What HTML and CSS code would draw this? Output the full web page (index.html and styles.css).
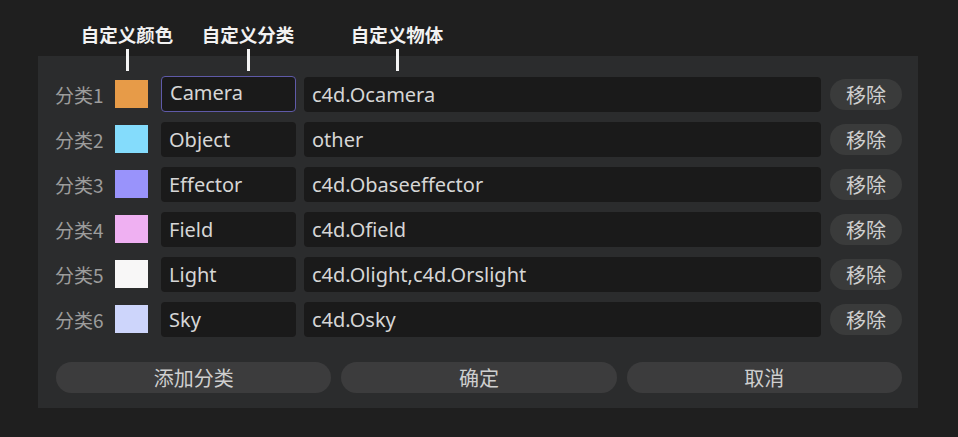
FILE: index.html
```html
<!DOCTYPE html>
<html lang="zh">
<head>
<meta charset="utf-8">
<link rel="stylesheet" href="styles.css">
</head>
<body>
<div class="header">
  <div class="note note-color"><span class="note-text">自定义颜色</span><span class="note-line"></span></div>
  <div class="note note-name"><span class="note-text">自定义分类</span><span class="note-line"></span></div>
  <div class="note note-obj"><span class="note-text">自定义物体</span><span class="note-line"></span></div>
</div>
<div class="panel">
  <div class="rows">
    <div class="row">
      <span class="label">分类1</span>
      <span class="swatch" style="background:#e79b48"></span>
      <div class="field name focused">Camera</div>
      <div class="field obj">c4d.Ocamera</div>
      <button class="remove">移除</button>
    </div>
    <div class="row">
      <span class="label">分类2</span>
      <span class="swatch" style="background:#84dcfc"></span>
      <div class="field name">Object</div>
      <div class="field obj">other</div>
      <button class="remove">移除</button>
    </div>
    <div class="row">
      <span class="label">分类3</span>
      <span class="swatch" style="background:#9993fb"></span>
      <div class="field name">Effector</div>
      <div class="field obj">c4d.Obaseeffector</div>
      <button class="remove">移除</button>
    </div>
    <div class="row">
      <span class="label">分类4</span>
      <span class="swatch" style="background:#efb0f2"></span>
      <div class="field name">Field</div>
      <div class="field obj">c4d.Ofield</div>
      <button class="remove">移除</button>
    </div>
    <div class="row">
      <span class="label">分类5</span>
      <span class="swatch" style="background:#f8f7f7"></span>
      <div class="field name">Light</div>
      <div class="field obj">c4d.Olight,c4d.Orslight</div>
      <button class="remove">移除</button>
    </div>
    <div class="row">
      <span class="label">分类6</span>
      <span class="swatch" style="background:#cdd5fb"></span>
      <div class="field name">Sky</div>
      <div class="field obj">c4d.Osky</div>
      <button class="remove">移除</button>
    </div>
  </div>
  <div class="actions">
    <button class="action">添加分类</button>
    <button class="action">确定</button>
    <button class="action">取消</button>
  </div>
</div>
</body>
</html>
```
FILE: styles.css
```css
* { box-sizing: border-box; }
html, body { margin: 0; padding: 0; }
body {
  background: #1f1f1f;
  width: 958px;
  height: 437px;
  overflow: hidden;
  font-family: "Noto Sans", "Noto Sans CJK SC", sans-serif;
}
.header {
  position: relative;
  z-index: 2;
  height: 56px;
  display: flex;
  align-items: flex-start;
  padding-top: 22px;
}
.note {
  display: flex;
  flex-direction: column;
  align-items: center;
  width: 94px;
  flex-shrink: 0;
}
.note-color { margin-left: 80px; }
.note-name { margin-left: 27px; }
.note-obj { margin-left: 55px; }
.note-text {
  font-family: "Noto Sans CJK SC", sans-serif;
  font-weight: 700;
  font-size: 18.5px;
  line-height: 24px;
  color: #f2f2f2;
  white-space: nowrap;
}
.note-line {
  display: block;
  flex-shrink: 0;
  width: 3px;
  height: 22px;
  margin-top: 3px;
  background: #f4f4f4;
}
.panel {
  margin-left: 38px;
  width: 880px;
  height: 352px;
  background: #2b2c2d;
  padding: 21px 16px 0 18px;
}
.rows {
  display: flex;
  flex-direction: column;
  gap: 10px;
}
.row {
  display: flex;
  align-items: center;
  height: 35px;
}
.label {
  width: 50px;
  margin-left: -1px;
  font-family: "Noto Sans CJK SC", sans-serif;
  font-size: 19px;
  color: #9c9c9c;
  white-space: nowrap;
}
.swatch {
  width: 33px;
  height: 28px;
  margin-left: 10px;
  margin-top: -2px;
}
.field {
  height: 35px;
  background: #1a1a1a;
  border-radius: 4px;
  color: #d6d6d6;
  font-size: 20px;
  line-height: 35px;
  padding-left: 8px;
  white-space: nowrap;
}
.name {
  width: 135px;
  margin-left: 13px;
}
.focused {
  border: 1.5px solid #5f5aa8;
  line-height: 32px;
  height: 36px;
  margin-top: -1px;
}
.obj {
  width: 517px;
  margin-left: 8px;
}
.remove {
  width: 72px;
  height: 31px;
  margin-left: 9px;
  border: none;
  border-radius: 16px;
  background: #3a3b3b;
  color: #cfcfcf;
  font-family: "Noto Sans CJK SC", sans-serif;
  font-size: 20px;
  line-height: 31px;
  padding: 0;
}
.actions {
  display: flex;
  gap: 10px;
  margin-top: 25px;
}
.action {
  width: 276px;
  height: 31px;
  border: none;
  border-radius: 16px;
  background: #3c3c3d;
  color: #cfcfcf;
  font-family: "Noto Sans CJK SC", sans-serif;
  font-size: 20px;
  line-height: 31px;
  padding: 0;
}
```
